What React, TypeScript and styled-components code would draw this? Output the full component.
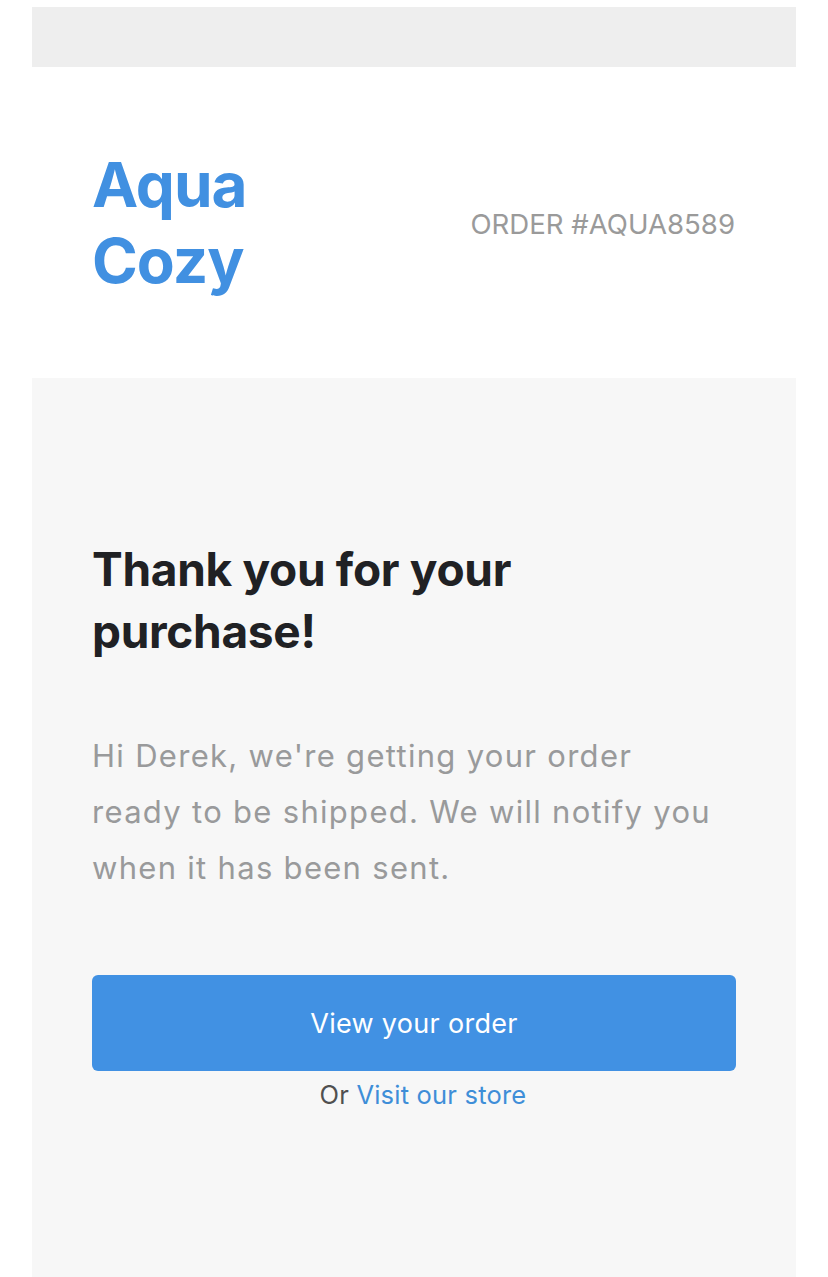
import React from "react";
import styled, { createGlobalStyle } from "styled-components";

const Global = createGlobalStyle`
  html, body { margin: 0; padding: 0; background: #ffffff; }
  body { font-family: Inter, "Liberation Sans", sans-serif; -webkit-font-smoothing: antialiased; }
  * { box-sizing: border-box; }
`;

const Page = styled.div`
  width: 764px;
  margin: 7px 32px 0;
  display: flex;
  flex-direction: column;
`;

const TopBar = styled.div`
  height: 60px;
  background: #eeeeee;
`;

const Header = styled.header`
  height: 311px;
  padding: 0 61px 0 60px;
  display: flex;
  align-items: center;
  justify-content: space-between;
  background: #ffffff;
`;

const Logo = styled.div`
  font-size: 62px;
  line-height: 76px;
  font-weight: 700;
  color: #4190e1;
  letter-spacing: -1px;
`;

const OrderNo = styled.div`
  font-size: 27.6px;
  line-height: 34px;
  color: #9a9a9a;
  margin-top: 2px;
`;

const Main = styled.main`
  background: #f7f7f7;
  min-height: 899px;
  padding: 160px 60px 120px;
  display: flex;
  flex-direction: column;
`;

const Title = styled.h1`
  margin: 0;
  max-width: 560px;
  font-size: 46px;
  line-height: 62px;
  font-weight: 700;
  color: #202124;
  letter-spacing: -0.3px;
`;

const Lead = styled.p`
  margin: 66px 0 0;
  max-width: 630px;
  font-size: 31px;
  line-height: 56px;
  color: #999a9b;
  letter-spacing: 1.3px;
`;

const Button = styled.a`
  margin-top: 79px;
  height: 96px;
  border-radius: 6px;
  background: #4191e3;
  color: #ffffff;
  display: flex;
  align-items: center;
  justify-content: center;
  font-size: 27px;
  font-weight: 400;
  letter-spacing: 0.3px;
  text-decoration: none;
`;

const Alt = styled.div`
  margin-top: 6px;
  padding-left: 18px;
  text-align: center;
  font-size: 25.5px;
  line-height: 36px;
  color: #505050;
  letter-spacing: 0.2px;
`;

const Link = styled.a`
  color: #3e8ed8;
  text-decoration: none;
`;

export default function App() {
  return (
    <>
      <Global />
      <Page>
        <TopBar />
        <Header>
          <Logo>
            Aqua
            <br />
            Cozy
          </Logo>
          <OrderNo>ORDER #AQUA8589</OrderNo>
        </Header>
        <Main>
          <Title>Thank you for your purchase!</Title>
          <Lead>
            Hi Derek, we're getting your order ready to be shipped. We will notify you when it has
            been sent.
          </Lead>
          <Button href="#">View your order</Button>
          <Alt>
            Or <Link href="#">Visit our store</Link>
          </Alt>
        </Main>
      </Page>
    </>
  );
}
